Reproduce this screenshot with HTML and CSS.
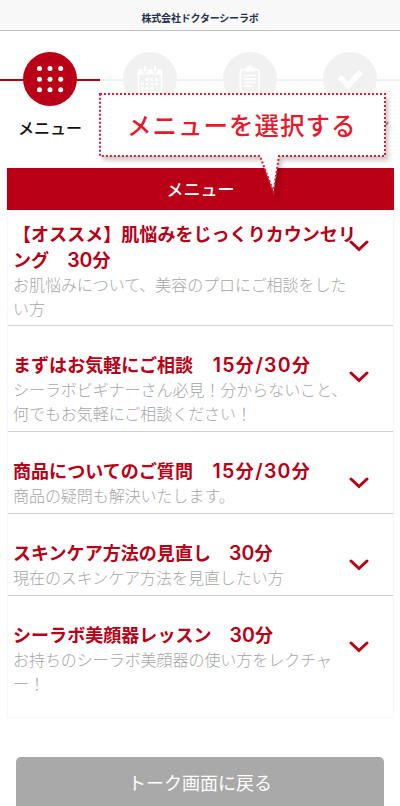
FILE: index.html
```html
<!DOCTYPE html>
<html lang="ja">
<head>
<meta charset="utf-8">
<title>メニュー</title>
<link rel="stylesheet" href="styles.css">
</head>
<body>
<header class="topbar">株式会社ドクターシーラボ</header>
<nav class="steps">
  <div class="step active">
    <div class="circle"><svg width="54" height="54" viewBox="0 0 54 54" fill="#fff"><circle cx="16.500" cy="16.500" r="2.500"/><circle cx="27" cy="16.500" r="2.500"/><circle cx="37.700" cy="16.500" r="2.500"/><circle cx="16.500" cy="27.200" r="2.500"/><circle cx="27" cy="27.200" r="2.500"/><circle cx="37.700" cy="27.200" r="2.500"/><circle cx="16.500" cy="37.800" r="2.500"/><circle cx="27" cy="37.800" r="2.500"/><circle cx="37.700" cy="37.800" r="2.500"/></svg></div>
    <div class="label">メニュー</div>
  </div>
  <div class="step">
    <div class="circle"><svg width="54" height="54" viewBox="0 0 54 54" fill="none" stroke="#fff" stroke-width="1.500"><rect x="15.500" y="18" width="23" height="22" rx="2"/><path d="M15 20H39" stroke-width="5"/><path d="M22 15v4M32 15v4" stroke="#f1f1f1" stroke-width="5" stroke-linecap="round"/><path d="M22 15v3.500M32 15v3.500" stroke-width="2.200" stroke-linecap="round"/><path d="M22.500 27.500H37M18 32H37M18 36.500H32" stroke-width="2.800" stroke-dasharray="2.800 1.900"/></svg></div>
  </div>
  <div class="step">
    <div class="circle"><svg width="54" height="54" viewBox="0 0 54 54" fill="none" stroke="#fff" stroke-width="1.600"><rect x="17.500" y="17.500" width="18.500" height="23" rx="2.500"/><path d="M22 15.500h10v4H22z" fill="#fff" stroke="none"/><circle cx="27" cy="15.500" r="1.700" fill="#fff"/><path d="M21 23.500H33M21 27H33M21 30.500H33M21 34H29"/></svg></div>
  </div>
  <div class="step">
    <div class="circle"><svg width="54" height="54" viewBox="0 0 54 54" fill="none" stroke="#fff" stroke-width="5.500"><path d="M16.500 25L25 33.500L38 20"/></svg></div>
  </div>
</nav>
<main class="panel">
  <h1 class="panel-head">メニュー</h1>
  <section class="row first">
    <div class="text"><h2>【オススメ】肌悩みをじっくりカウンセリ<br>ング　<b>30</b>分</h2><p>お肌悩みについて、美容のプロにご相談をした<br>い方</p></div>
    <svg class="chev" width="20" height="12" viewBox="0 0 20 12"><path d="M2 2L10 9.500L18 2"/></svg>
  </section>
  <section class="row">
    <div class="text"><h2>まずはお気軽にご相談　<b class="wide">15</b>分<b class="wide">/30</b>分</h2><p>シーラボビギナーさん必見！分からないこと、<br>何でもお気軽にご相談ください！</p></div>
    <svg class="chev" width="20" height="12" viewBox="0 0 20 12"><path d="M2 2L10 9.500L18 2"/></svg>
  </section>
  <section class="row">
    <div class="text"><h2>商品についてのご質問　<b class="wide">15</b>分<b class="wide">/30</b>分</h2><p>商品の疑問も解決いたします。</p></div>
    <svg class="chev" width="20" height="12" viewBox="0 0 20 12"><path d="M2 2L10 9.500L18 2"/></svg>
  </section>
  <section class="row">
    <div class="text"><h2>スキンケア方法の見直し　<b>30</b>分</h2><p>現在のスキンケア方法を見直したい方</p></div>
    <svg class="chev" width="20" height="12" viewBox="0 0 20 12"><path d="M2 2L10 9.500L18 2"/></svg>
  </section>
  <section class="row last">
    <div class="text"><h2>シーラボ美顔器レッスン　<b>30</b>分</h2><p>お持ちのシーラボ美顔器の使い方をレクチャ<br>ー！</p></div>
    <svg class="chev" width="20" height="12" viewBox="0 0 20 12"><path d="M2 2L10 9.500L18 2"/></svg>
  </section>
</main>
<button class="back">トーク画面に戻る</button>
<div class="callout">
  <svg class="balloon" width="300" height="112" viewBox="0 0 300 112"><path d="M291 35l2 -3" stroke="#777" stroke-width="1.500"/><path class="shape" d="M5 4H290V66H184L178.500 102L165 66H5Z"/></svg>
  <span class="callout-text">メニューを選択する</span>
</div>
</body>
</html>
```

FILE: styles.css
```css
* { box-sizing: border-box; }
body {
  margin: 0;
  width: 400px;
  height: 806px;
  overflow: hidden;
  position: relative;
  background: #fff;
  font-family: "Noto Sans CJK JP", sans-serif;
}
h1, h2, p { margin: 0; }
.topbar {
  height: 31px;
  padding-top: 7px;
  background: #f8f8f8;
  border-bottom: 1px solid #c4c4c4;
  color: #26304a;
  font-size: 10px;
  font-weight: 700;
  line-height: 22px;
  letter-spacing: -0.2px;
  text-align: center;
}
.steps { display: flex; height: 137px; padding-top: 21px; }
.step {
  width: 100px;
  display: flex;
  flex-direction: column;
  align-items: center;
  background: linear-gradient(#f1f1f1, #f1f1f1) 0 27px / 100% 2px no-repeat;
}
.step.active { background-image: linear-gradient(#b90016, #b90016); }
.circle { width: 54px; height: 54px; border-radius: 50%; background: #f1f1f1; }
.active .circle { background: #b90016; }
.circle svg { display: block; }
.label {
  margin-top: 9px;
  font-size: 16px;
  line-height: 24px;
  font-weight: 500;
  color: #111;
}
.panel {
  width: 387px;
  height: 550px;
  margin-left: 7px;
  border: 1px solid #f7f7f7;
  border-top: 0;
}
.panel-head {
  height: 42px;
  margin: 0 -1px;
  background: #b90016;
  color: #fff;
  font-size: 17px;
  font-weight: 500;
  line-height: 41px;
  text-align: center;
}
.row {
  display: flex;
  align-items: flex-start;
  padding: 25px 0 6px 5px;
  border-bottom: 1px solid #d0d0d0;
}
.row.first { padding: 10px 0 5px 5px; }
.row.last { border-bottom: 0; }
.text { width: 336px; white-space: nowrap; }
h2 {
  color: #b90016;
  font-size: 18px;
  line-height: 26px;
  font-weight: 700;
  letter-spacing: 0.05px;
}
h2 b {
  font-family: Inter, sans-serif;
  font-size: 19.500px;
  font-weight: 600;
  line-height: 20px;
}
.wide { letter-spacing: 1.300px; margin-left: 1.500px; }
p { color: #a6a6a6; font-size: 16px; line-height: 24px; font-weight: 300; letter-spacing: -0.05px; }
.chev {
  flex: none;
  margin-top: 20px;
  fill: none;
  stroke: #b90016;
  stroke-width: 3;
  stroke-linecap: round;
}
.back {
  display: block;
  width: 368px;
  height: 60px;
  margin: 39px 0 0 16px;
  padding: 0 0 10px;
  border: 0;
  border-radius: 5px;
  background: #a9a9a9;
  color: #fff;
  font: 400 18px/50px "Noto Sans CJK JP", sans-serif;
}
.callout { position: absolute; left: 95px; top: 90px; width: 300px; height: 112px; }
.balloon { display: block; filter: drop-shadow(3px 4px 2px rgba(0, 0, 0, 0.2)); }
.shape { fill: #fff; stroke: #e8192c; stroke-width: 2; stroke-dasharray: 2 2; }
.callout-text {
  position: absolute;
  left: 32px;
  top: 17px;
  color: #e8192c;
  font-size: 24.500px;
  font-weight: 500;
  line-height: 36px;
  letter-spacing: 1px;
  white-space: nowrap;
}
```
